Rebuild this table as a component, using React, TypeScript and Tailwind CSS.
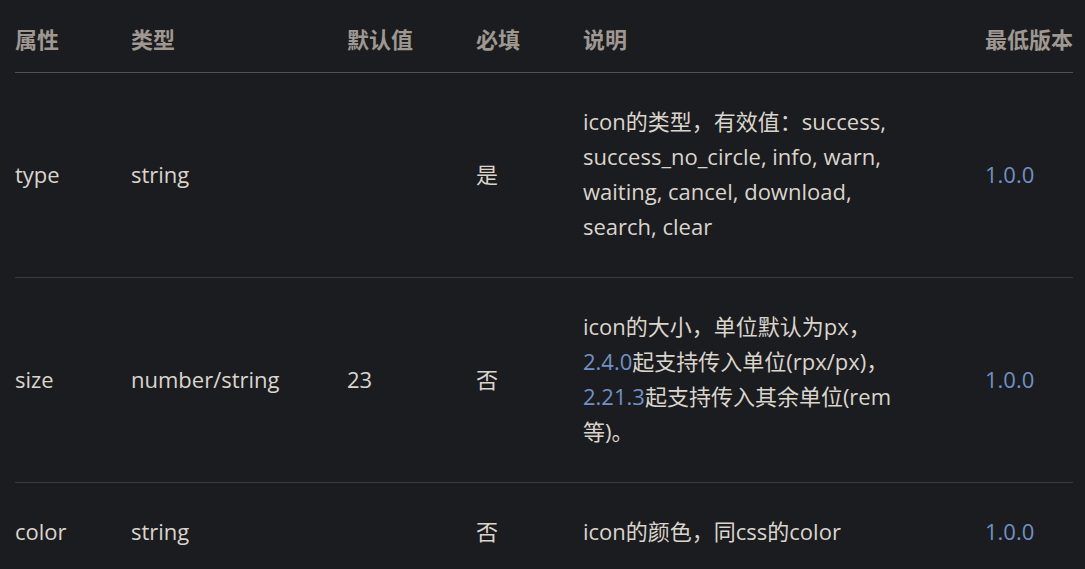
const link = 'text-[#7091c4]'

type Row = {
  name: string
  type: string
  def: string
  required: string
  desc: React.ReactNode[]
  since: string
}

const rows: Row[] = [
  {
    name: 'type',
    type: 'string',
    def: '',
    required: '是',
    desc: [
      'icon的类型，有效值：success,',
      'success_no_circle, info, warn,',
      'waiting, cancel, download,',
      'search, clear',
    ],
    since: '1.0.0',
  },
  {
    name: 'size',
    type: 'number/string',
    def: '23',
    required: '否',
    desc: [
      'icon的大小，单位默认为px，',
      <><span className={link}>2.4.0</span>起支持传入单位(rpx/px)，</>,
      <><span className={link}>2.21.3</span>起支持传入其余单位(rem</>,
      '等)。',
    ],
    since: '1.0.0',
  },
  {
    name: 'color',
    type: 'string',
    def: '',
    required: '否',
    desc: ['icon的颜色，同css的color'],
    since: '1.0.0',
  },
]

const cols = 'grid grid-cols-[116px_216px_129px_107px_402px_88px]'

export default function App() {
  return (
    <div
      className="min-h-[569px] bg-[#1b1c1f] pl-[15px] pr-[12px] text-[22px] leading-[35px] text-[#dad5cc]"
      style={{ fontFamily: '"Open Sans", "Noto Sans CJK SC", sans-serif' }}
    >
      {/* header */}
      <div className={`${cols} border-b border-[#505052] pt-[22px] pb-[15px] font-bold text-[#9e9890]`}>
        <div>属性</div>
        <div>类型</div>
        <div>默认值</div>
        <div>必填</div>
        <div>说明</div>
        <div>最低版本</div>
      </div>

      {rows.map((r, i) => (
        <div
          key={r.name}
          className={`${cols} items-center pt-[31px] pb-[33px] ${i < rows.length - 1 ? 'border-b border-[#3a3b3d]' : ''}`}
        >
          <div>{r.name}</div>
          <div>{r.type}</div>
          <div>{r.def}</div>
          <div>{r.required}</div>
          <div className="whitespace-nowrap">
            {r.desc.map((line, j) => (
              <div key={j}>{line}</div>
            ))}
          </div>
          <div className={link}>{r.since}</div>
        </div>
      ))}
    </div>
  )
}
